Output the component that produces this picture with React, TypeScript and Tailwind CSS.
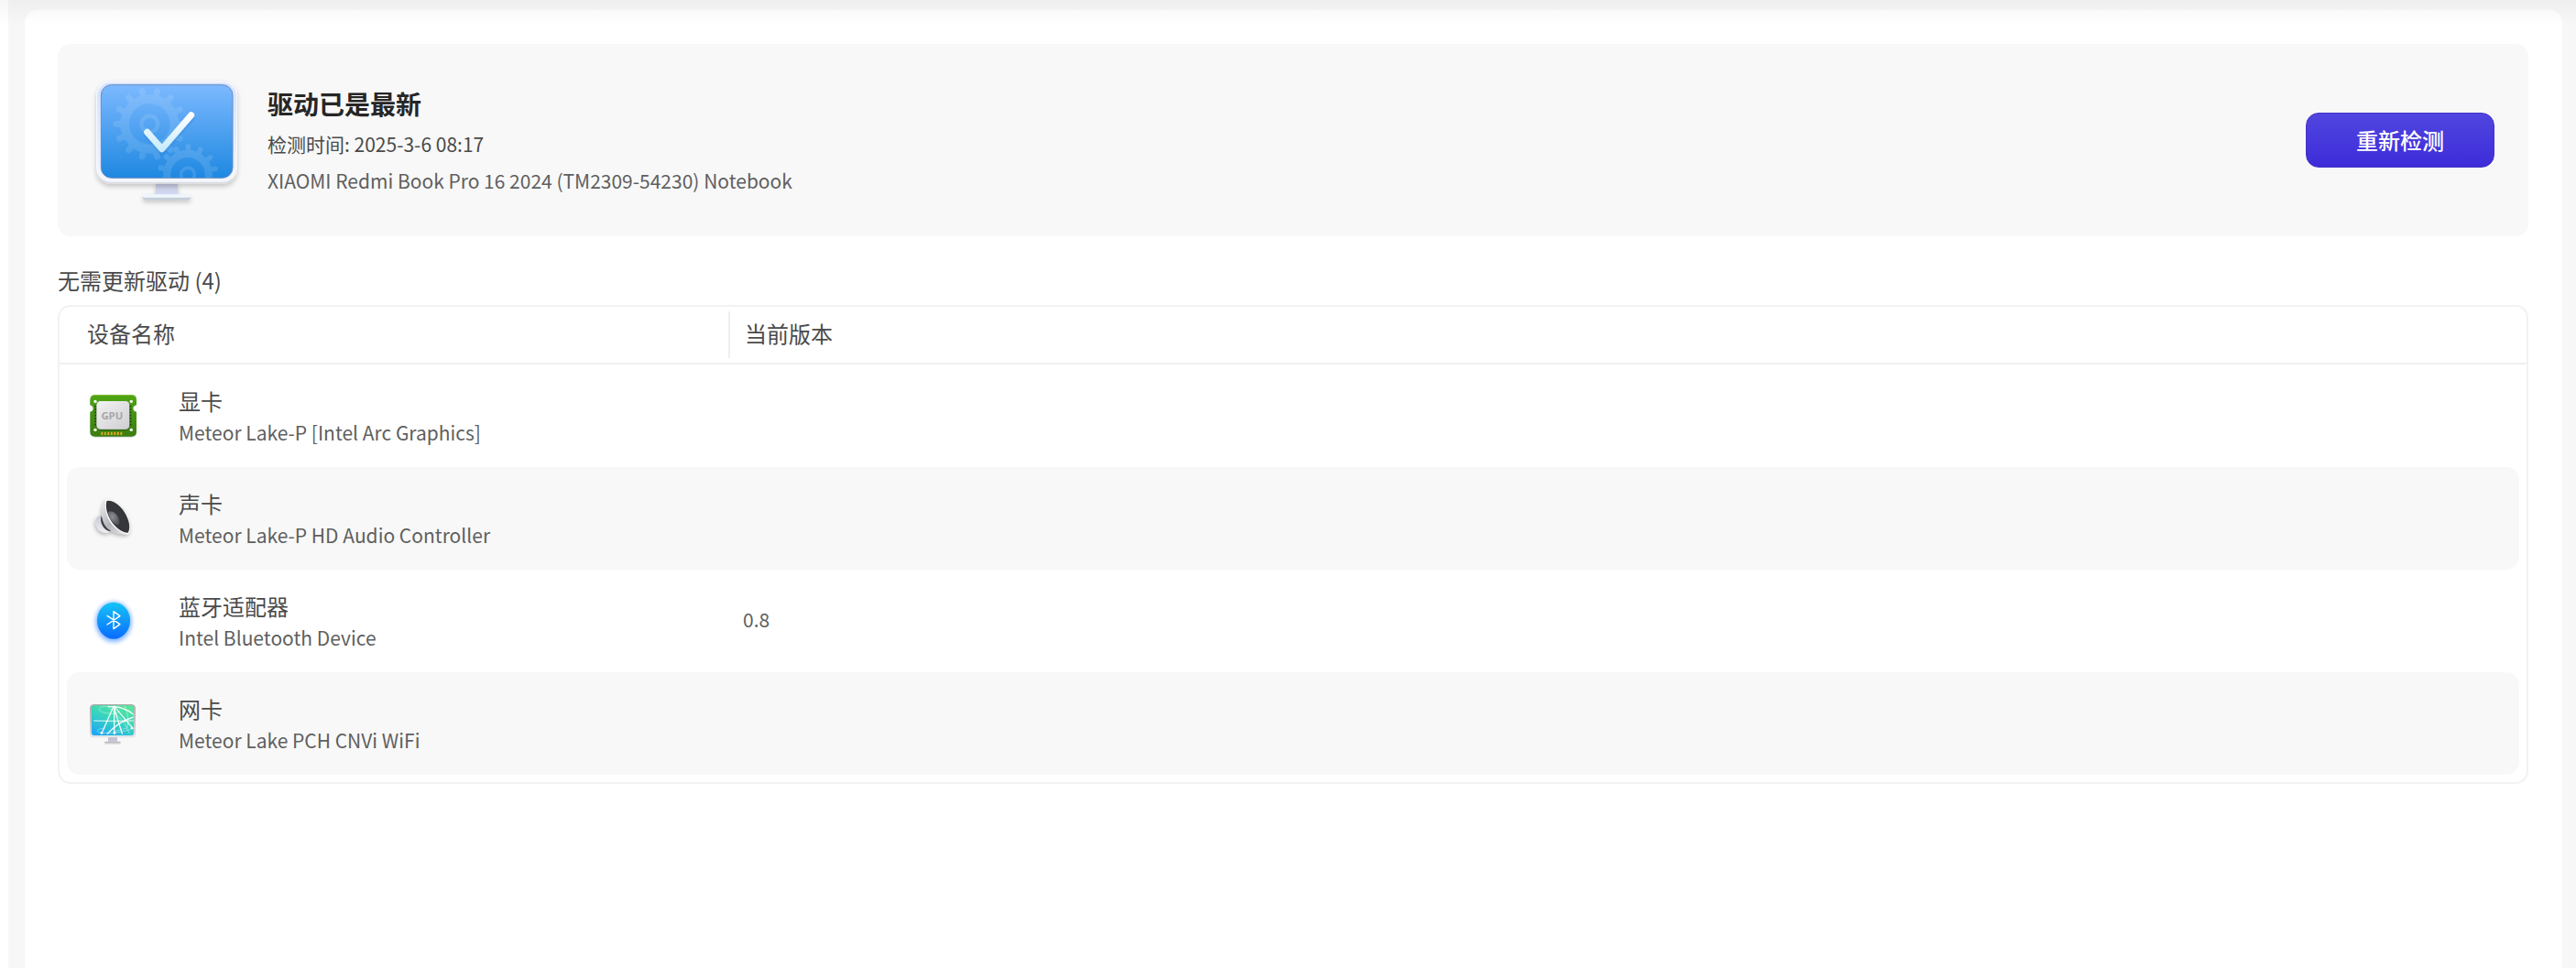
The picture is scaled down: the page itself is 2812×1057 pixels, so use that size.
import type React from "react"

interface Device {
  id: string
  name: string
  model: string
  version: string
  icon: React.ReactNode
}

interface GearProps {
  cx: number
  cy: number
  radius: number
  offset: number
  opacity: number
}

const TEETH = Array.from({ length: 14 }, (_, i) => (i * 360) / 14)

function Gear({ cx, cy, radius, offset, opacity }: GearProps) {
  return (
    <g stroke="#ffffff" fill="none" opacity={opacity} transform={`translate(${cx} ${cy}) rotate(${offset})`}>
      <circle r={radius * 0.69} strokeWidth={radius * 0.25} />
      <circle r={radius * 0.225} strokeWidth={radius * 0.11} />
      {TEETH.map((angle) => (
        <line
          key={angle}
          y1={-radius * 0.78}
          y2={-radius * 0.93}
          strokeWidth={radius * 0.17}
          strokeLinecap="round"
          transform={`rotate(${angle})`}
        />
      ))}
    </g>
  )
}

function MonitorCheckIcon() {
  return (
    <svg className="w-[164px] h-[148px] shrink-0" viewBox="300 237 492 444" aria-hidden="true">
      <defs>
        <linearGradient id="screen" x1="0" y1="0" x2="0" y2="1">
          <stop offset="0" stopColor="#7cb9ff" />
          <stop offset="1" stopColor="#1e88e1" />
        </linearGradient>
        <linearGradient id="frame" x1="0" y1="0" x2="0" y2="1">
          <stop offset="0" stopColor="#d5e2fd" />
          <stop offset="1" stopColor="#f3f6fe" />
        </linearGradient>
        <linearGradient id="stand" x1="0" y1="0" x2="0" y2="1">
          <stop offset="0" stopColor="#c8cbe2" />
          <stop offset="1" stopColor="#d3daf6" />
        </linearGradient>
        <linearGradient id="check" x1="0" y1="0" x2="0" y2="1">
          <stop offset="0" stopColor="#ffffff" />
          <stop offset="1" stopColor="#c9ebfd" />
        </linearGradient>
        <clipPath id="screenClip">
          <rect x="331" y="278" width="431" height="305" rx="34" />
        </clipPath>
        <filter id="softShadow" x="-20%" y="-20%" width="140%" height="160%">
          <feDropShadow dx="0" dy="9" stdDeviation="8" floodColor="#000000" floodOpacity="0.2" />
        </filter>
      </defs>
      <g filter="url(#softShadow)">
        <rect x="510" y="598" width="72" height="42" fill="url(#stand)" />
        <rect x="468" y="638" width="156" height="16" rx="5" fill="#c4ced8" />
        <rect x="468" y="637" width="156" height="10" rx="4" fill="#f0f7fc" />
      </g>
      <g filter="url(#softShadow)">
        <rect x="315" y="265" width="462" height="337" rx="48" fill="#dcdde2" />
        <rect x="315" y="265" width="462" height="331" rx="48" fill="#f6f8fe" />
        <rect x="318" y="271" width="456" height="322" rx="44" fill="url(#frame)" />
      </g>
      <rect x="331" y="278" width="431" height="305" rx="34" fill="url(#screen)" stroke="#6a8cc0" strokeWidth="3" />
      <g clipPath="url(#screenClip)">
        <Gear cx={490} cy={406} radius={118} offset={12.85} opacity={0.11} />
        <Gear cx={615} cy={572} radius={99} offset={1} opacity={0.12} />
      </g>
      <path
        d="M482 434 L530 489 L626 378"
        transform="translate(0 8)"
        fill="none"
        stroke="#1568b8"
        strokeOpacity="0.14"
        strokeWidth="24"
        strokeLinecap="round"
        strokeLinejoin="round"
      />
      <path
        d="M482 433 L530 488 L626 377"
        fill="none"
        stroke="url(#check)"
        strokeWidth="21"
        strokeLinecap="round"
        strokeLinejoin="round"
      />
    </svg>
  )
}

function GpuIcon() {
  return (
    <svg className="size-14" viewBox="48 48 168 168" aria-hidden="true">
      <defs>
        <linearGradient id="board" x1="0" y1="0" x2="0" y2="1">
          <stop offset="0" stopColor="#4fa512" />
          <stop offset="1" stopColor="#3b7d13" />
        </linearGradient>
        <linearGradient id="chip" x1="0" y1="0" x2="1" y2="1">
          <stop offset="0" stopColor="#f2f2f4" />
          <stop offset="1" stopColor="#cfcfd2" />
        </linearGradient>
      </defs>
      <path
        d="M71 67H191Q207 67 207 83V99Q196 101 196 109Q196 117 207 119V187Q207 203 191 203H71Q55 203 55 187V119Q65 117 65 109Q65 101 55 99V83Q55 67 71 67Z"
        fill="#000000"
        opacity="0.15"
      />
      <path
        d="M71 64H191Q207 64 207 80V97Q196 99 196 108Q196 117 207 119V184Q207 200 191 200H71Q55 200 55 184V119Q65 117 65 108Q65 99 55 97V80Q55 64 71 64Z"
        fill="url(#board)"
      />
      <path d="M60 70Q64 65 71 65H191Q199 65 203 70" fill="none" stroke="#7fb92c" strokeWidth="2" />
      <g fill="#ffffff">
        <circle cx="72" cy="85" r="5" />
        <circle cx="190" cy="85" r="5" />
        <circle cx="72" cy="178" r="5" />
        <circle cx="190" cy="178" r="5" />
      </g>
      <path d="M73 98V168M187 98V168" stroke="#1f4d08" strokeWidth="6" strokeDasharray="6 4" />
      <path d="M91 190H162" stroke="#e0a91f" strokeWidth="10" strokeDasharray="6 4.5" />
      <rect x="76" y="88" width="108" height="93" rx="14" fill="#1e4b0b" opacity="0.5" />
      <rect x="76" y="84" width="108" height="93" rx="13" fill="#b9bcb9" />
      <rect x="77" y="84" width="106" height="91" rx="13" fill="url(#chip)" />
      <text
        x="127"
        y="145"
        textAnchor="middle"
        fontSize="34"
        fontWeight="700"
        fill="#a6a6a8"
        fontFamily="'Open Sans', sans-serif"
      >
        GPU
      </text>
    </svg>
  )
}

function SpeakerIcon() {
  return (
    <svg className="size-14" viewBox="48 54 168 168" aria-hidden="true">
      <defs>
        <linearGradient id="horn" x1="0" y1="0" x2="1" y2="1">
          <stop offset="0" stopColor="#f0f0f2" />
          <stop offset="0.5" stopColor="#b4b5ba" />
          <stop offset="1" stopColor="#f2f2f4" />
        </linearGradient>
        <linearGradient id="magnet" x1="0" y1="0" x2="0" y2="1">
          <stop offset="0" stopColor="#c9cbd3" />
          <stop offset="1" stopColor="#eceef4" />
        </linearGradient>
        <radialGradient id="dome" cx="0.4" cy="0.4" r="0.6">
          <stop offset="0" stopColor="#8e8f94" />
          <stop offset="1" stopColor="#56575c" />
        </radialGradient>
        <filter id="speakerShadow" x="-30%" y="-30%" width="160%" height="160%">
          <feDropShadow dx="-3" dy="7" stdDeviation="7" floodColor="#000000" floodOpacity="0.28" />
        </filter>
      </defs>
      <g filter="url(#speakerShadow)">
        <path d="M92 129Q78 129 73 142Q70 160 84 176Q100 189 117 183L124 174Z" fill="url(#magnet)" />
        <path d="M92 130Q86 148 98 166Q106 178 120 181L126 173Q100 160 97 130Z" fill="#3b3b3f" />
        <path
          d="M106 76C96 92 92 112 93 132C98 158 108 172 127 181C146 188 166 191 180 189C190 178 187 144 172 118C154 88 124 70 106 76Z"
          fill="url(#horn)"
        />
        <path
          d="M106 76C101 106 108 136 128 160C142 177 164 190 180 189C190 178 187 144 172 118C154 88 124 70 106 76Z"
          fill="#fafafa"
        />
      </g>
      <path
        d="M109 82C104 104 112 132 130 155C145 173 164 186 179 185C189 168 182 142 169 120C153 94 126 75 109 82Z"
        fill="#36373a"
      />
      <path d="M113 117C124 110 143 121 149 139C153 154 149 160 142 160C130 153 117 139 113 117Z" fill="url(#dome)" />
    </svg>
  )
}

function BluetoothIcon() {
  return (
    <svg className="size-14" viewBox="48 45 168 168" aria-hidden="true">
      <defs>
        <linearGradient id="btFill" x1="0" y1="0" x2="0" y2="1">
          <stop offset="0" stopColor="#15c4f6" />
          <stop offset="1" stopColor="#0a6cff" />
        </linearGradient>
        <filter id="btGlow" x="-30%" y="-30%" width="160%" height="160%">
          <feGaussianBlur stdDeviation="6" />
        </filter>
      </defs>
      <ellipse cx="132" cy="132" rx="60" ry="67" fill="#2f86ff" opacity="0.55" filter="url(#btGlow)" />
      <ellipse cx="132" cy="128" rx="54" ry="60" fill="url(#btFill)" />
      <path
        d="M111 112L153 140L132 155V98L153 113L111 141"
        fill="none"
        stroke="#ffffff"
        strokeWidth="4"
        strokeLinejoin="round"
        strokeLinecap="round"
      />
    </svg>
  )
}

function NetworkIcon() {
  return (
    <svg className="size-14" viewBox="48 51 168 168" aria-hidden="true">
      <defs>
        <linearGradient id="netScreen" x1="0.8" y1="0" x2="0.2" y2="1">
          <stop offset="0" stopColor="#55e69a" />
          <stop offset="0.5" stopColor="#38d3c0" />
          <stop offset="1" stopColor="#1fa9f0" />
        </linearGradient>
        <linearGradient id="netFrame" x1="0" y1="0" x2="0" y2="1">
          <stop offset="0" stopColor="#a9abad" />
          <stop offset="1" stopColor="#dddde3" />
        </linearGradient>
        <clipPath id="netClip">
          <rect x="61" y="77" width="136" height="96" rx="9" />
        </clipPath>
      </defs>
      <rect x="114" y="178" width="30" height="16" fill="#c3c3d2" />
      <rect x="103" y="195" width="52" height="8" rx="2" fill="#dcdcdc" />
      <rect x="103" y="194" width="52" height="5" rx="2" fill="#b9b9bb" />
      <rect x="54" y="72" width="150" height="109" rx="14" fill="url(#netFrame)" />
      <rect x="56" y="172" width="146" height="8" rx="4" fill="#e4e4ea" />
      <rect x="60" y="76" width="138" height="98" rx="10" fill="url(#netScreen)" />
      <g clipPath="url(#netClip)" fill="none" stroke="#ffffff" strokeLinecap="round">
        <g strokeOpacity="0.9" strokeWidth="4">
          <path d="M132 79L93 167" />
          <path d="M134 79V168" />
          <path d="M132 79L160 168" />
          <path d="M134 79L196 152" />
          <path d="M112 168Q150 128 198 114" />
          <path d="M114 80Q162 76 198 106" />
          <path d="M68 126Q130 128 198 126" strokeWidth="3" />
        </g>
        <g strokeOpacity="0.4" strokeWidth="3">
          <path d="M114 78C78 78 78 94 100 99S142 106 150 96" />
          <path d="M104 150C76 152 70 163 92 166S170 164 196 150" />
          <path d="M168 77Q186 120 176 150L136 160" />
          <path d="M118 84L166 130L184 168" />
        </g>
        <g fill="#ffffff" stroke="none">
          <circle cx="133" cy="80" r="4" />
          <circle cx="93" cy="166" r="4" />
          <circle cx="135" cy="166" r="4" />
          <circle cx="192" cy="150" r="4" />
          <circle cx="169" cy="126" r="4" />
        </g>
      </g>
    </svg>
  )
}

const devices: Device[] = [
  { id: "gpu", name: "显卡", model: "Meteor Lake-P [Intel Arc Graphics]", version: "", icon: <GpuIcon /> },
  { id: "audio", name: "声卡", model: "Meteor Lake-P HD Audio Controller", version: "", icon: <SpeakerIcon /> },
  { id: "bluetooth", name: "蓝牙适配器", model: "Intel Bluetooth Device", version: "0.8", icon: <BluetoothIcon /> },
  { id: "network", name: "网卡", model: "Meteor Lake PCH CNVi WiFi", version: "", icon: <NetworkIcon /> },
]

function StatusCard() {
  return (
    <section className="flex items-center rounded-[14px] bg-[#f8f8f8] py-[31px] px-[37px]">
      <MonitorCheckIcon />
      <div className="ml-7 min-w-0 flex-1">
        <h1 className="text-[28px] leading-10 font-bold text-[#262626]">驱动已是最新</h1>
        <p className="mt-2 text-[21px] leading-8 text-[#4a4a4a]">检测时间: 2025-3-6 08:17</p>
        <p className="mt-2 text-[21px] leading-8 text-[#5f5f5f]">XIAOMI Redmi Book Pro 16 2024 (TM2309-54230) Notebook</p>
      </div>
      <button
        type="button"
        className="h-[60px] w-[206px] shrink-0 rounded-[14px] border border-[#4434c8] bg-linear-to-b from-[#5145e0] to-[#3d2bd9] text-2xl font-medium text-white hover:brightness-110"
      >
        重新检测
      </button>
    </section>
  )
}

function DeviceTable() {
  return (
    <div className="rounded-[14px] border-2 border-[#f2f2f2] pb-2">
      <table className="w-full table-fixed border-separate border-spacing-0 text-left">
        <colgroup>
          <col className="w-[732px]" />
          <col />
        </colgroup>
        <thead>
          <tr>
            <th scope="col" className="h-[63px] border-b-2 border-[#efefef] p-0 font-normal">
              <div className="flex h-[51px] items-center border-r-2 border-[#efefef] pb-1 pl-[30px] text-2xl text-[#4a4a4a]">
                设备名称
              </div>
            </th>
            <th scope="col" className="h-[63px] border-b-2 border-[#efefef] p-0 font-normal">
              <div className="flex h-[51px] items-center pb-1 pl-4 text-2xl text-[#4a4a4a]">当前版本</div>
            </th>
          </tr>
        </thead>
        <tbody>
          {devices.map((device, index) => {
            const bg = index % 2 === 1 ? "bg-[#f8f8f8]" : "bg-white"

            return (
              <tr key={device.id}>
                <td className="p-0 pl-2">
                  <div className={`flex h-28 items-center rounded-l-[14px] pl-[23px] ${bg}`}>
                    {device.icon}
                    <div className="ml-[43px] pb-1">
                      <div className="text-2xl leading-10 text-[#4a4a4a]">{device.name}</div>
                      <div className="text-[21px] leading-7 text-[#5f5f5f]">{device.model}</div>
                    </div>
                  </div>
                </td>
                <td className="p-0 pr-2">
                  <div className={`flex h-28 items-center rounded-r-[14px] pb-0.5 pl-3.5 text-[21px] text-[#5f5f5f] ${bg}`}>
                    {device.version}
                  </div>
                </td>
              </tr>
            )
          })}
        </tbody>
      </table>
    </div>
  )
}

export default function App() {
  return (
    <div className="relative flex min-h-screen bg-[#f7f7f7] font-['Noto_Sans_CJK_SC','Noto_Sans',sans-serif]">
      <div className="w-[9px] shrink-0 bg-white" />
      <main className="ml-[18px] mr-[15px] mt-[11px] min-w-0 flex-1 rounded-t-[14px] bg-white pl-9 pr-[37px] pt-[37px]">
        <StatusCard />
        <h2 className="mt-[30px] mb-[9px] text-2xl leading-9 text-[#4a4a4a]">无需更新驱动 (4)</h2>
        <DeviceTable />
      </main>
      {/* Shadow cast by the title bar above */}
      <div className="pointer-events-none absolute inset-x-0 top-0 h-7 bg-linear-to-b from-black/[0.035] to-transparent" />
    </div>
  )
}
